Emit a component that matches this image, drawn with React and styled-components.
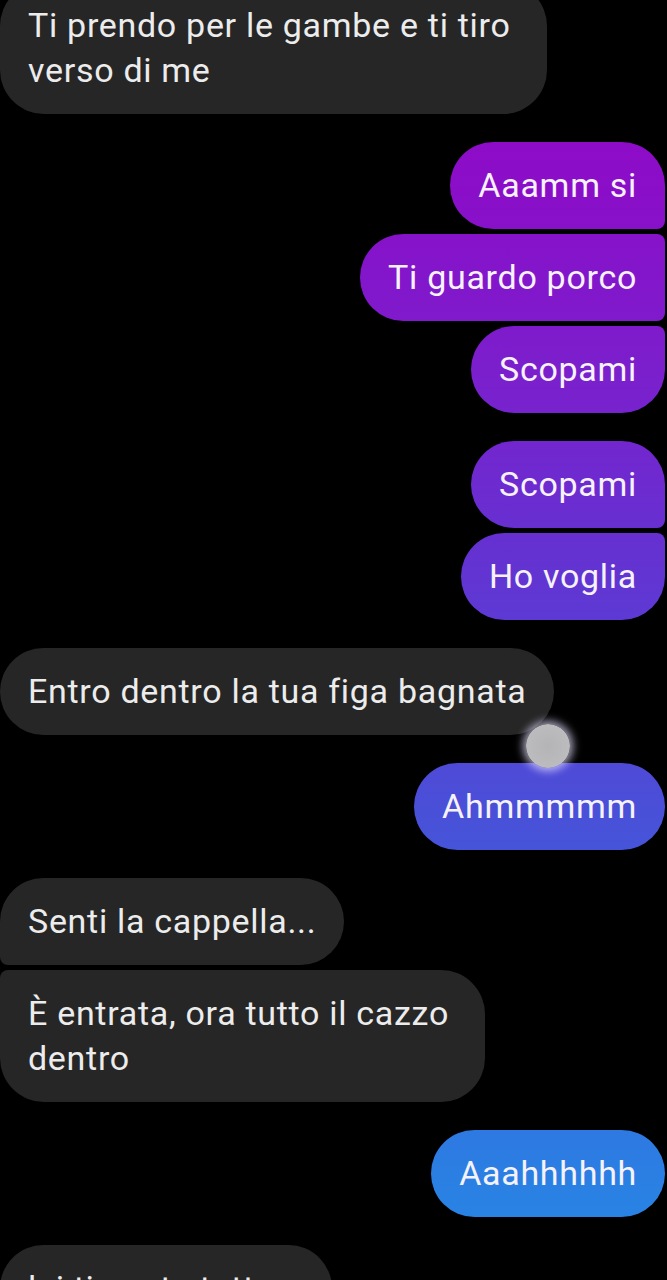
import React from "react";
import styled, { createGlobalStyle, css } from "styled-components";

const GlobalStyle = createGlobalStyle`
  html, body {
    margin: 0;
    padding: 0;
    background: #000;
  }
  body {
    font-family: Roboto, "Noto Sans", "Liberation Sans", sans-serif;
    -webkit-font-smoothing: antialiased;
  }
`;

const BIG = 44;
const SMALL = 8;

const messages = [
    { side: "in", items: ["Ti prendo per le gambe e ti tiro\nverso di me"], wrapped: [true] },
    { side: "out", items: ["Aaamm si", "Ti guardo porco", "Scopami"] },
    { side: "out", items: ["Scopami", "Ho voglia"] },
    { side: "in", items: ["Entro dentro la tua figa bagnata"] },
    { side: "out", items: ["Ahmmmmm"] },
    { side: "in", items: ["Senti la cappella...", "È entrata, ora tutto il cazzo\ndentro"], wrapped: [false, true] },
    { side: "out", items: ["Aaahhhhhh"] },
    { side: "in", items: ["lei ti sente tutto..."] },
];

function corners(side, index, count) {
    const first = index === 0;
    const last = index === count - 1;
    const top = first ? BIG : SMALL;
    const bottom = last ? BIG : SMALL;
    if (side === "out") {
        return `${BIG}px ${top}px ${bottom}px ${BIG}px`;
    }
    return `${top}px ${BIG}px ${BIG}px ${bottom}px`;
}

function App() {
    return (
        <Screen>
            <GlobalStyle />
            <Thread>
                {messages.map((group, gi) => (
                    <Group key={gi} side={group.side}>
                        {group.items.map((text, i) => (
                            <Bubble
                                key={i}
                                side={group.side}
                                wrapped={group.wrapped?.[i]}
                                radius={corners(group.side, i, group.items.length)}
                            >
                                {text}
                            </Bubble>
                        ))}
                    </Group>
                ))}
            </Thread>
            <Touch />
        </Screen>
    );
}

export default App;

const Screen = styled.div`
    position: relative;
    width: 667px;
    height: 1280px;
    overflow: hidden;
    background: #000;
`;

const Thread = styled.div`
    display: flex;
    flex-direction: column;
    gap: 28px;
    margin-top: -18px;
    padding-right: 2px;
`;

const Group = styled.div`
    display: flex;
    flex-direction: column;
    gap: 5px;
    align-items: ${(p) => (p.side === "out" ? "flex-end" : "flex-start")};
`;

const Bubble = styled.div.withConfig({
    shouldForwardProp: (prop) => !["side", "wrapped", "radius"].includes(prop),
})`
    white-space: pre-line;
    font-size: 34px;
    line-height: 45px;
    letter-spacing: 0.7px;
    padding: 21px ${(p) => (p.wrapped ? 36 : 28)}px 21px 28px;
    border-radius: ${(p) => p.radius};
    ${(p) =>
        p.side === "out"
            ? css`
                  color: #f6f2fb;
                  background: linear-gradient(
                          180deg,
                          #9806c6 0%,
                          #8a0ec8 15%,
                          #7a20cd 30%,
                          #6630d1 42%,
                          #4a4fd8 63%,
                          #3666de 77%,
                          #2b7fe3 92%,
                          #2488e5 100%
                      )
                      fixed;
              `
            : css`
                  color: #ececec;
                  background: #262626;
              `}
`;

const Touch = styled.div`
    position: absolute;
    left: 526px;
    top: 724px;
    width: 44px;
    height: 44px;
    border-radius: 50%;
    background: radial-gradient(circle, #b4b4b6 0%, #bcbcbe 70%, #e6e2f6 100%);
    box-shadow: 0 0 8px 3px rgba(225, 220, 255, 0.75);
`;
